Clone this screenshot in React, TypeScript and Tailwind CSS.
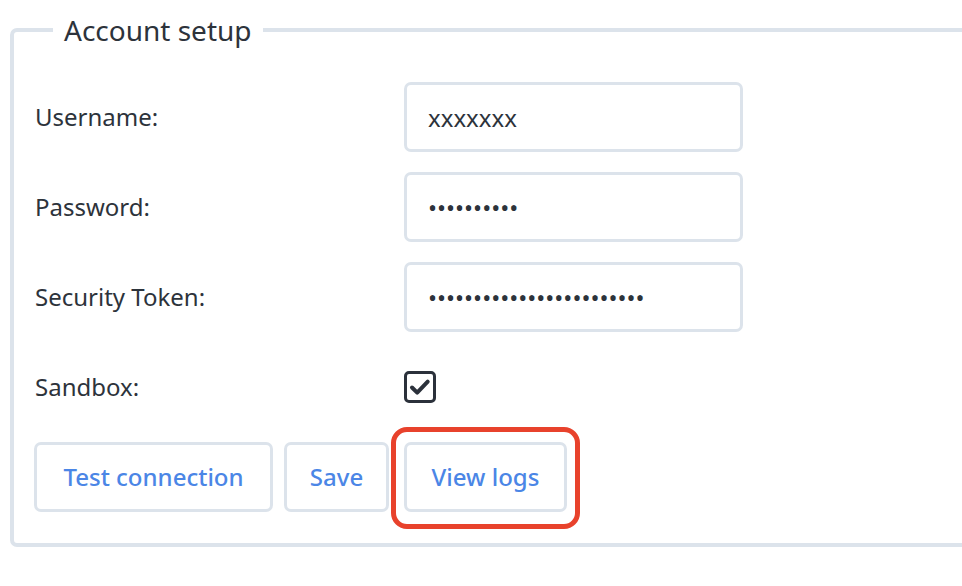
import React from "react";

type FieldRowProps = {
  label: string;
  id: string;
  type: "text" | "password";
  value: string;
};

const FieldRow = ({ label, id, type, value }: FieldRowProps) => {
  return (
    <>
      <label htmlFor={id} className="flex h-[70px] items-center">
        {label}
      </label>
      <input
        id={id}
        type={type}
        value={value}
        readOnly
        className="h-[70px] w-[339px] rounded-[7px] border-[3px] border-[#dce3eb] bg-white px-[21px] text-[24px] text-[#2d333b] outline-none"
      />
    </>
  );
};

const CheckIcon = () => (
  <svg width="32" height="32" viewBox="0 0 32 32" fill="none">
    <rect
      x="1.5"
      y="1.5"
      width="29"
      height="29"
      rx="3.5"
      stroke="#2b313b"
      strokeWidth="3"
    />
    <path
      d="M8 16.5l5.2 5.2 10.5-11"
      stroke="#2b313b"
      strokeWidth="4"
      strokeLinecap="round"
      strokeLinejoin="round"
    />
  </svg>
);

const ActionButton = ({
  children,
  className,
}: {
  children: React.ReactNode;
  className: string;
}) => (
  <button
    type="button"
    className={`h-[70px] rounded-[7px] border-[3px] border-[#dce3eb] bg-white text-[24px] font-medium text-[#4b86e6] ${className}`}
  >
    {children}
  </button>
);

export default function App() {
  return (
    <div
      className="h-[586px] w-[962px] overflow-hidden bg-white text-[24px] text-[#2d333b]"
      style={{ fontFamily: '"Noto Sans", "Open Sans", sans-serif' }}
    >
      <fieldset className="ml-[10px] mt-[10px] w-[1000px] rounded-[7px] border-4 border-[#dce3eb] pb-[31px] pl-[21px] pt-[32px]">
        <legend className="ml-[18px] px-[11px] text-[28px] leading-[40px] text-[#2d333b]">
          Account setup
        </legend>

        <div className="grid grid-cols-[369px_339px] gap-y-[20px]">
          <FieldRow label="Username:" id="username" type="text" value="xxxxxxx" />
          <FieldRow label="Password:" id="password" type="password" value="xxxxxxxxxx" />
          <FieldRow
            label="Security Token:"
            id="token"
            type="password"
            value="xxxxxxxxxxxxxxxxxxxxxxxx"
          />
          <div className="flex h-[70px] items-center">Sandbox:</div>
          <div className="flex h-[70px] items-center">
            <CheckIcon />
          </div>
        </div>

        <div className="mt-[20px] flex items-center">
          <ActionButton className="-ml-px mr-[11px] w-[239px]">Test connection</ActionButton>
          <ActionButton className="mr-[15px] w-[105px]">Save</ActionButton>
          <div className="relative">
            <ActionButton className="w-[163px]">View logs</ActionButton>
            <div className="pointer-events-none absolute bottom-[-17px] left-[-13px] right-[-13px] top-[-15px] rounded-[16px] border-[5px] border-[#e8422c]" />
          </div>
        </div>
      </fieldset>
    </div>
  );
}
